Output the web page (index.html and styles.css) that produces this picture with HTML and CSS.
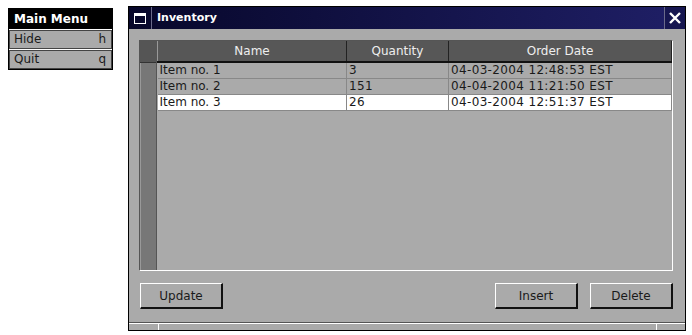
FILE: index.html
```html
<!DOCTYPE html>
<html lang="en">
<head>
    <meta charset="UTF-8">
    <title>Inventory</title>
    <link rel="stylesheet" href="styles.css">
</head>
<body>
    <div class="desktop">
        <div class="menu">
            <div class="menu-title">Main Menu</div>
            <div class="menu-item"><span>Hide</span><span>h</span></div>
            <div class="menu-item"><span>Quit</span><span>q</span></div>
        </div>

        <div class="window">
            <div class="titlebar">
                <div class="title-icon"><span class="icon-box"></span></div>
                <div class="title-text">Inventory</div>
                <div class="title-close">
                    <svg width="12" height="12" viewBox="0 0 12 12">
                        <path d="M1 1 L11 11 M11 1 L1 11" stroke="#ffffff" stroke-width="2.4" fill="none"/>
                    </svg>
                </div>
            </div>

            <div class="window-body">
                <div class="table-frame">
                    <div class="row-header">
                        <div class="corner"></div>
                    </div>
                    <table class="grid">
                        <thead>
                            <tr>
                                <th class="col-name">Name</th>
                                <th class="col-qty">Quantity</th>
                                <th class="col-date">Order Date</th>
                            </tr>
                        </thead>
                        <tbody>
                            <tr>
                                <td>Item no. 1</td>
                                <td class="num">3</td>
                                <td class="date">04-03-2004 12:48:53 EST</td>
                            </tr>
                            <tr>
                                <td>Item no. 2</td>
                                <td class="num">151</td>
                                <td class="date">04-04-2004 11:21:50 EST</td>
                            </tr>
                            <tr class="current">
                                <td>Item no. 3</td>
                                <td class="num">26</td>
                                <td class="date">04-03-2004 12:51:37 EST</td>
                            </tr>
                        </tbody>
                    </table>
                </div>

                <div class="buttons">
                    <button class="btn">Update</button>
                    <div class="spacer"></div>
                    <button class="btn">Insert</button>
                    <button class="btn">Delete</button>
                </div>
            </div>

            <div class="statusbar">
                <div class="status-cell first"></div>
                <div class="status-cell wide"></div>
                <div class="status-cell last"></div>
            </div>
        </div>
    </div>
</body>
</html>
```

FILE: styles.css
```css
body {
    margin: 0;
    background: #ffffff;
    font-family: "DejaVu Sans", sans-serif;
    font-size: 12px;
    color: #000000;
}

.desktop {
    display: flex;
    align-items: flex-start;
}

/* main menu */
.menu {
    margin: 8px 0 0 8px;
    width: 103px;
    border: 1px solid #000000;
    background: #ffffff;
}

.menu-title {
    height: 20px;
    line-height: 20px;
    background: #000000;
    color: #ffffff;
    font-weight: bold;
    padding-left: 5px;
}

.menu-item {
    display: flex;
    justify-content: space-between;
    height: 17px;
    line-height: 17px;
    margin-top: 1px;
    padding: 0 5px 0 4px;
    background: #aaaaaa;
    border: 1px solid #444444;
    color: #1a1a1a;
}

/* window */
.window {
    margin: 6px 0 0 15px;
    width: 556px;
    height: 323px;
    border: 1px solid #000000;
    background: #aaaaaa;
    display: flex;
    flex-direction: column;
}

.titlebar {
    display: flex;
    height: 22px;
    background: linear-gradient(to right, #07072a, #1f1f66);
    color: #ffffff;
}

.title-icon {
    width: 22px;
    border-right: 1px solid #6a6a8a;
    display: flex;
    align-items: center;
    justify-content: center;
}

.icon-box {
    width: 10px;
    height: 7px;
    border: 1.5px solid #ffffff;
    border-top-width: 3px;
}

.title-text {
    flex: 1;
    padding-left: 5px;
    line-height: 22px;
    font-weight: bold;
    font-size: 11px;
}

.title-close {
    width: 20px;
    border-left: 1px solid #6a6a8a;
    display: flex;
    align-items: center;
    justify-content: center;
    background: #161650;
}

.window-body {
    flex: 1;
    padding: 11px 12px 0 10px;
}

/* table */
.table-frame {
    height: 229px;
    border-top: 1px solid #555555;
    border-left: 1px solid #555555;
    border-right: 1px solid #ffffff;
    border-bottom: 1px solid #ffffff;
    display: flex;
}

.row-header {
    width: 18px;
    background: #777777;
    border-right: 1px solid #555555;
    border-left: 1px solid #999999;
}

.corner {
    height: 21px;
    margin-left: -1px;
    background: #555555;
    border-bottom: 1px solid #333333;
}

.grid {
    border-collapse: collapse;
    width: 513px;
    height: 0;
    table-layout: fixed;
}

.grid th {
    height: 20px;
    padding: 0;
    background: #575757;
    color: #eeeeee;
    font-weight: normal;
    border-left: 1px solid #999999;
    border-right: 1px solid #222222;
    border-bottom: 2px solid #111111;
}

.grid .col-name { width: 188px; }
.grid .col-qty { width: 101px; }
.grid .col-date { width: 222px; }

.grid td {
    height: 15px;
    padding: 0 2px;
    line-height: 15px;
    color: #1a1a1a;
    border-right: 1px solid #888888;
    border-bottom: 1px solid #888888;
    white-space: nowrap;
    overflow: hidden;
}

.grid td.num,
.grid td.date {
    letter-spacing: 0.35px;
}

.grid tr.current td {
    background: #ffffff;
}

/* buttons */
.buttons {
    display: flex;
    gap: 12px;
    margin-top: 12px;
    padding-left: 1px;
}

.spacer {
    flex: 1;
}

.btn {
    width: 83px;
    height: 26px;
    background: #aaaaaa;
    border-top: 1px solid #ffffff;
    border-left: 1px solid #ffffff;
    border-right: 2px solid #111111;
    border-bottom: 2px solid #111111;
    font-family: "DejaVu Sans", sans-serif;
    font-size: 12px;
    color: #1a1a1a;
    padding: 0;
}

/* status bar */
.statusbar {
    display: flex;
    height: 7px;
    border-top: 1px solid #555555;
}

.status-cell {
    border-top: 1px solid #ffffff;
}

.status-cell.first {
    width: 29px;
}

.status-cell.wide {
    flex: 1;
    border-left: 1px solid #ffffff;
}

.status-cell.last {
    width: 28px;
    border-left: 1px solid #ffffff;
}
```
